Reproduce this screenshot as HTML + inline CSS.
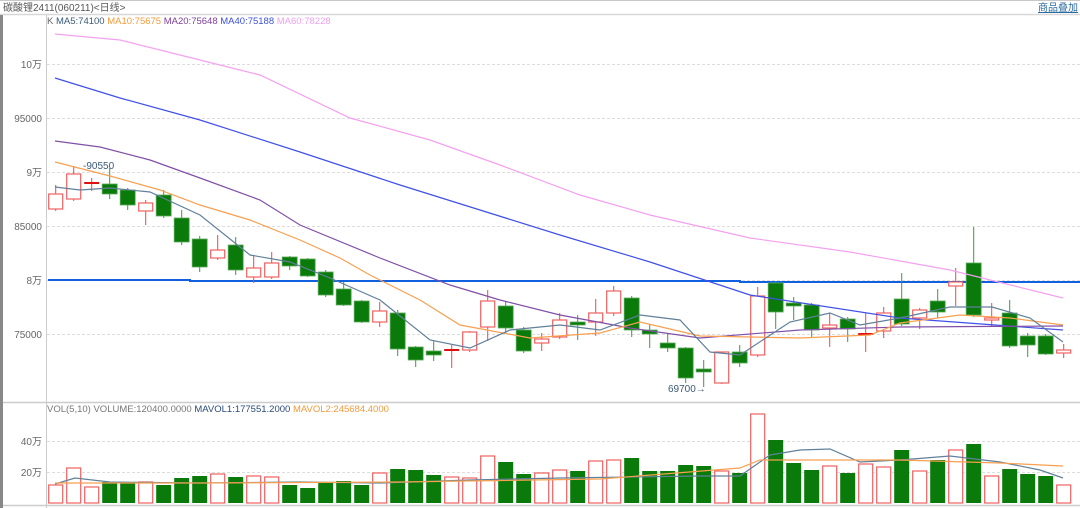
<!DOCTYPE html>
<html><head><meta charset="utf-8"><style>
html,body{margin:0;padding:0;background:#fff;width:1080px;height:508px;overflow:hidden;font-family:"Liberation Sans","Noto Sans CJK SC",sans-serif}
svg text{font-family:"Liberation Sans","Noto Sans CJK SC",sans-serif}
</style></head><body>
<svg id="s" width="1080" height="508" xmlns="http://www.w3.org/2000/svg">
<rect x="0" y="0" width="1080" height="508" fill="#fff"/>
<line x1="0" y1="14.5" x2="1080" y2="14.5" stroke="#d8d8d8" stroke-width="1.5"/>
<line x1="0" y1="0.5" x2="1080" y2="0.5" stroke="#c8c8c8"/>
<text x="3" y="11" font-size="10" fill="#555">碳酸锂2411(060211)&lt;日线&gt;</text>
<text x="1038" y="11" font-size="10" fill="#2a6aa0" text-decoration="underline">商品叠加</text>
<rect x="0" y="15" width="3" height="493" fill="#888"/>
<line x1="46.5" y1="15" x2="46.5" y2="508" stroke="#ccc"/>
<line x1="3" y1="402.5" x2="1080" y2="402.5" stroke="#ccc" stroke-width="1.5"/>
<line x1="3" y1="505.5" x2="1080" y2="505.5" stroke="#ccc" stroke-width="1.5"/>
<g stroke="#ddd" stroke-dasharray="3,2">
<line x1="47" y1="64.5" x2="1080" y2="64.5"/><line x1="47" y1="118.5" x2="1080" y2="118.5"/>
<line x1="47" y1="172.5" x2="1080" y2="172.5"/><line x1="47" y1="226.5" x2="1080" y2="226.5"/>
<line x1="47" y1="280.5" x2="1080" y2="280.5"/><line x1="47" y1="334.5" x2="1080" y2="334.5"/>
<line x1="47" y1="441.5" x2="1080" y2="441.5"/><line x1="47" y1="472.5" x2="1080" y2="472.5"/>
</g>
<g font-size="10" fill="#666" text-anchor="end">
<text x="42" y="68">10万</text><text x="42" y="122">95000</text><text x="42" y="176">9万</text>
<text x="42" y="230">85000</text><text x="42" y="284">8万</text><text x="42" y="338">75000</text>
<text x="42" y="445">40万</text><text x="42" y="476">20万</text>
</g>
<text x="47" y="24" font-size="9.5"><tspan fill="#666">K  </tspan><tspan fill="#3a5a7a"> MA5:74100 </tspan><tspan fill="#f59a3a">MA10:75675 </tspan><tspan fill="#8040a0">MA20:75648 </tspan><tspan fill="#3a50e0">MA40:75188 </tspan><tspan fill="#f0a0f0">MA60:78228</tspan></text>
<text x="47" y="412" font-size="9.5"><tspan fill="#777">VOL(5,10) VOLUME:120400.0000 </tspan><tspan fill="#2a4a7a">MAVOL1:177551.2000 </tspan><tspan fill="#f59a3a">MAVOL2:245684.4000</tspan></text>
<polyline points="48,280 190,280 190,281 740,281 740,282 1080,282" fill="none" stroke="#1060e0" stroke-width="2"/>
<g id="c"></g>
<polyline points="55,34 120,40 180,55 260,75 350,118 430,140 500,165 580,195 650,215 750,238 850,252 950,270 1063,298" fill="none" stroke="#f4a0f0" stroke-width="1.2"/>
<polyline points="55,78 120,98 200,120 300,152 400,185 480,210 560,235 650,262 750,295 900,318 1063,330" fill="none" stroke="#4050e8" stroke-width="1.2"/>
<polyline points="55,141 100,147 150,160 200,178 260,200 300,225 380,258 450,285 500,300 560,315 630,328 700,338 800,330 900,327 1063,326" fill="none" stroke="#8050a8" stroke-width="1.2"/>
<polyline points="55,162 110,176 160,190 200,205 250,220 300,240 340,258 370,275 420,300 460,325 530,338 600,333 640,322 700,336 800,338 870,335 900,323 960,315 1010,318 1063,325" fill="none" stroke="#f8a050" stroke-width="1.2"/>
<polyline points="55,187 80,190 110,188 150,192 200,215 250,255 290,262 330,278 380,300 430,340 470,348 510,330 560,325 600,330 640,315 680,320 710,352 740,355 790,322 830,313 860,325 900,318 950,307 992,307 1030,318 1063,342" fill="none" stroke="#60809a" stroke-width="1.2"/>
<polyline points="55,484 75,478 110,482 200,483 300,482 380,483 470,480 560,478 700,476 740,476 770,455 800,450 830,449 860,462 900,460 950,456 1000,462 1040,470 1063,478" fill="none" stroke="#60809a" stroke-width="1.2"/>
<polyline points="55,483 200,483 400,482 600,479 740,468 760,460 900,460 1000,463 1063,466" fill="none" stroke="#f8a050" stroke-width="1.2"/>
<text x="83" y="169" font-size="10" fill="#3a5a7a">-90550</text>
<text x="668" y="392" font-size="10" fill="#3a5a7a">69700→</text>
</svg>
<script>
var d=[[1,209,194,185,211],[1,199,174,166,201],[1,183,183,178,191],[0,184,194,168,199],[0,190,205,188,210],[1,211,203,200,225],[0,195,216,190,218],[0,218,242,210,245],[0,239,267,236,272],[1,258,250,235,260],[0,245,270,237,275],[1,277,268,255,283],[1,277,263,252,279],[0,257,266,256,270],[0,259,276,258,277],[0,272,295,270,297],[0,289,305,282,306],[0,301,322,300,323],[1,322,311,302,327],[0,313,349,310,356],[0,347,360,346,367],[0,351,355,341,361],[1,350,350,345,368],[1,350,332,331,352],[1,327,301,290,341],[0,306,328,301,334],[0,330,351,327,353],[1,343,339,333,351],[1,337,320,313,339],[0,322,325,315,340],[1,322,313,299,336],[1,313,291,286,316],[0,298,330,296,337],[0,330,334,324,348],[0,343,348,334,352],[0,348,378,347,383],[0,369,372,360,387],[1,383,352,352,384],[0,352,363,345,367],[1,355,296,287,357],[0,283,312,281,329],[0,303,306,297,320],[0,305,330,303,338],[1,328,325,313,347],[0,319,329,317,342],[1,334,334,313,352],[1,331,313,307,338],[0,299,324,273,326],[1,318,310,308,329],[0,301,312,289,318],[1,286,282,268,306],[0,263,315,227,317],[1,320,318,303,327],[0,313,346,300,348],[0,336,345,333,357],[0,336,354,334,355],[1,353,350,344,358]];
var v=[485,468,487,482,482,482,485,478,476,474,477,476,477,485,488,482,481,485,473,469,470,475,477,478,456,462,474,473,470,471,461,460,458,471,471,465,466,471,473,414,440,463,470,466,473,464,467,450,471,460,450,444,476,469,474,476,485];
var h='';
for(var i=0;i<d.length;i++){var x=55.7+18*i,c=d[i];
var t=Math.min(c[1],c[2]),b=Math.max(c[1],c[2]);
h+='<line x1="'+x+'" y1="'+c[3]+'" x2="'+x+'" y2="'+c[4]+'" stroke="'+(c[0]?'#f04848':'#3a9a3a')+'" stroke-width="1"/>';
if(b-t<2){h+='<line x1="'+(x-7.5)+'" y1="'+t+'" x2="'+(x+7.5)+'" y2="'+t+'" stroke="'+(c[0]?'#e01010':'#0a7a0a')+'" stroke-width="2"/>';}
else if(c[0]){h+='<rect x="'+(x-7)+'" y="'+t+'" width="14" height="'+(b-t)+'" fill="#fff" stroke="#f06060" stroke-width="1.2"/>';}
else{h+='<rect x="'+(x-7.5)+'" y="'+t+'" width="15" height="'+(b-t)+'" fill="#0a7a0a" stroke="#5aaa5a" stroke-width="0.8"/>';}
var vt=v[i];
if(c[0])h+='<rect x="'+(x-7)+'" y="'+vt+'" width="14" height="'+(503-vt)+'" fill="#fff" stroke="#f06060" stroke-width="1.2"/>';
else h+='<rect x="'+(x-7.5)+'" y="'+vt+'" width="15" height="'+(503-vt)+'" fill="#0a7a0a"/>';
}
document.getElementById('c').innerHTML=h;
</script>
</body></html>
